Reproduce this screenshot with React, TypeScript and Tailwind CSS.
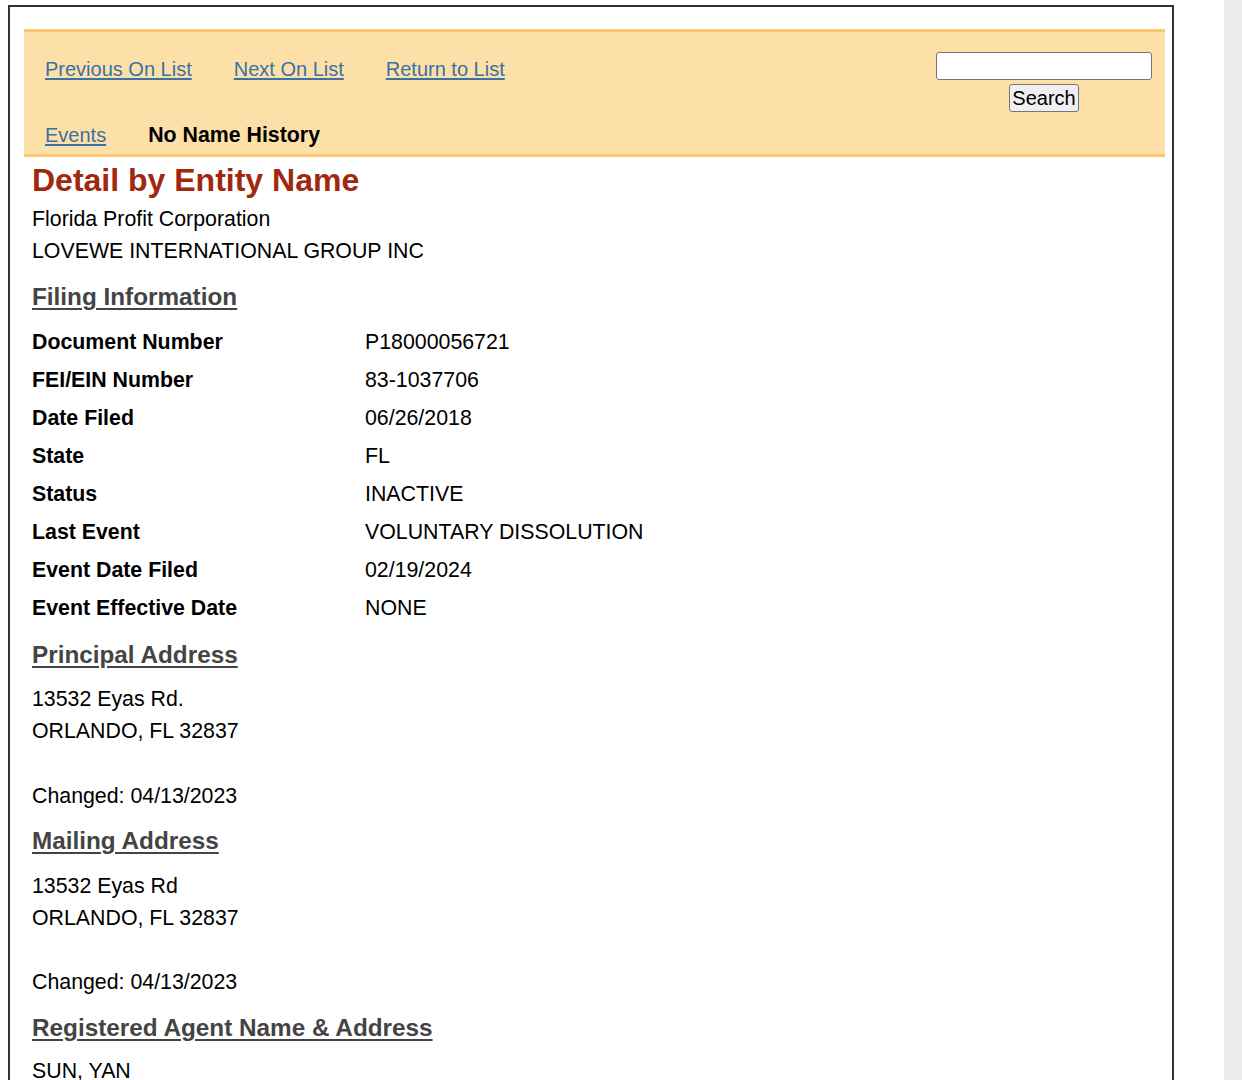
const font = { fontFamily: '"Liberation Sans", Arial, sans-serif' };

type Row = { label: string; value: string };

const filing: Row[] = [
  { label: 'Document Number', value: 'P18000056721' },
  { label: 'FEI/EIN Number', value: '83-1037706' },
  { label: 'Date Filed', value: '06/26/2018' },
  { label: 'State', value: 'FL' },
  { label: 'Status', value: 'INACTIVE' },
  { label: 'Last Event', value: 'VOLUNTARY DISSOLUTION' },
  { label: 'Event Date Filed', value: '02/19/2024' },
  { label: 'Event Effective Date', value: 'NONE' },
];

function NavLink({ children }: { children: string }) {
  return (
    <a href="#" className="text-[20px] leading-[28px] text-[#3a71a6] underline underline-offset-2">
      {children}
    </a>
  );
}

function SectionTitle({ children, className }: { children: string; className: string }) {
  return (
    <h2 className={`text-[24.3px] font-bold leading-[28px] text-[#444444] underline decoration-2 underline-offset-[3px] ${className}`}>
      {children}
    </h2>
  );
}

export default function App() {
  return (
    <div style={font} className="flex h-[1080px] w-[1242px] overflow-hidden bg-white text-black">
      <div className="ml-[8px] mt-[5px] h-[1200px] w-[1166px] border-2 border-[#333333] pl-[14px] pt-[22px]">
        {/* top navigation bar */}
        <div className="flex w-[1141px] justify-between border-y-[3px] border-[#fcc972] bg-[#fde0a8] pl-[21px] pr-[13px]">
          <div className="flex flex-col pb-[5px] pt-[23px]">
            <div className="flex gap-[42px]">
              <NavLink>Previous On List</NavLink>
              <NavLink>Next On List</NavLink>
              <NavLink>Return to List</NavLink>
            </div>
            <div className="mt-[38px] flex items-center gap-[42px]">
              <NavLink>Events</NavLink>
              <span className="text-[21.33px] font-bold leading-[28px]">No Name History</span>
            </div>
          </div>
          <div className="flex flex-col items-center gap-[4px] pt-[20px]">
            <input
              type="text"
              className="h-[28px] w-[216px] rounded-[3px] border border-[#767676] bg-white"
            />
            <button className="h-[28px] rounded-[3px] border border-[#767676] bg-[#efefef] px-[2px] text-[20px] leading-[24px] text-black">
              Search
            </button>
          </div>
        </div>

        {/* detail body */}
        <div className="pl-[8px] text-[21.33px] leading-[32px]">
          <h1 className="mt-[5px] text-[32px] font-bold leading-[36px] text-[#a0280f]">Detail by Entity Name</h1>
          <div className="mt-[5px]">
            <p>Florida Profit Corporation</p>
            <p>LOVEWE INTERNATIONAL GROUP INC</p>
          </div>

          <SectionTitle className="mt-[16px]">Filing Information</SectionTitle>
          <div className="mt-[12px]">
            {filing.map((r) => (
              <div key={r.label} className="flex h-[38px] items-center">
                <span className="w-[333px] font-bold">{r.label}</span>
                <span>{r.value}</span>
              </div>
            ))}
          </div>

          <SectionTitle className="mt-[14px]">Principal Address</SectionTitle>
          <div className="mt-[14px]">
            <p>13532 Eyas Rd.</p>
            <p>ORLANDO, FL 32837</p>
            <p>&nbsp;</p>
            <p className="mt-[1px]">Changed: 04/13/2023</p>
          </div>

          <SectionTitle className="mt-[15px]">Mailing Address</SectionTitle>
          <div className="mt-[15px]">
            <p>13532 Eyas Rd</p>
            <p>ORLANDO, FL 32837</p>
            <p>&nbsp;</p>
            <p>Changed: 04/13/2023</p>
          </div>

          <SectionTitle className="mt-[16px]">Registered Agent Name &amp; Address</SectionTitle>
          <div className="mt-[13px]">
            <p>SUN, YAN</p>
          </div>
        </div>
      </div>
      <div className="ml-auto h-full w-[18px] bg-[#ececec]" />
    </div>
  );
}
